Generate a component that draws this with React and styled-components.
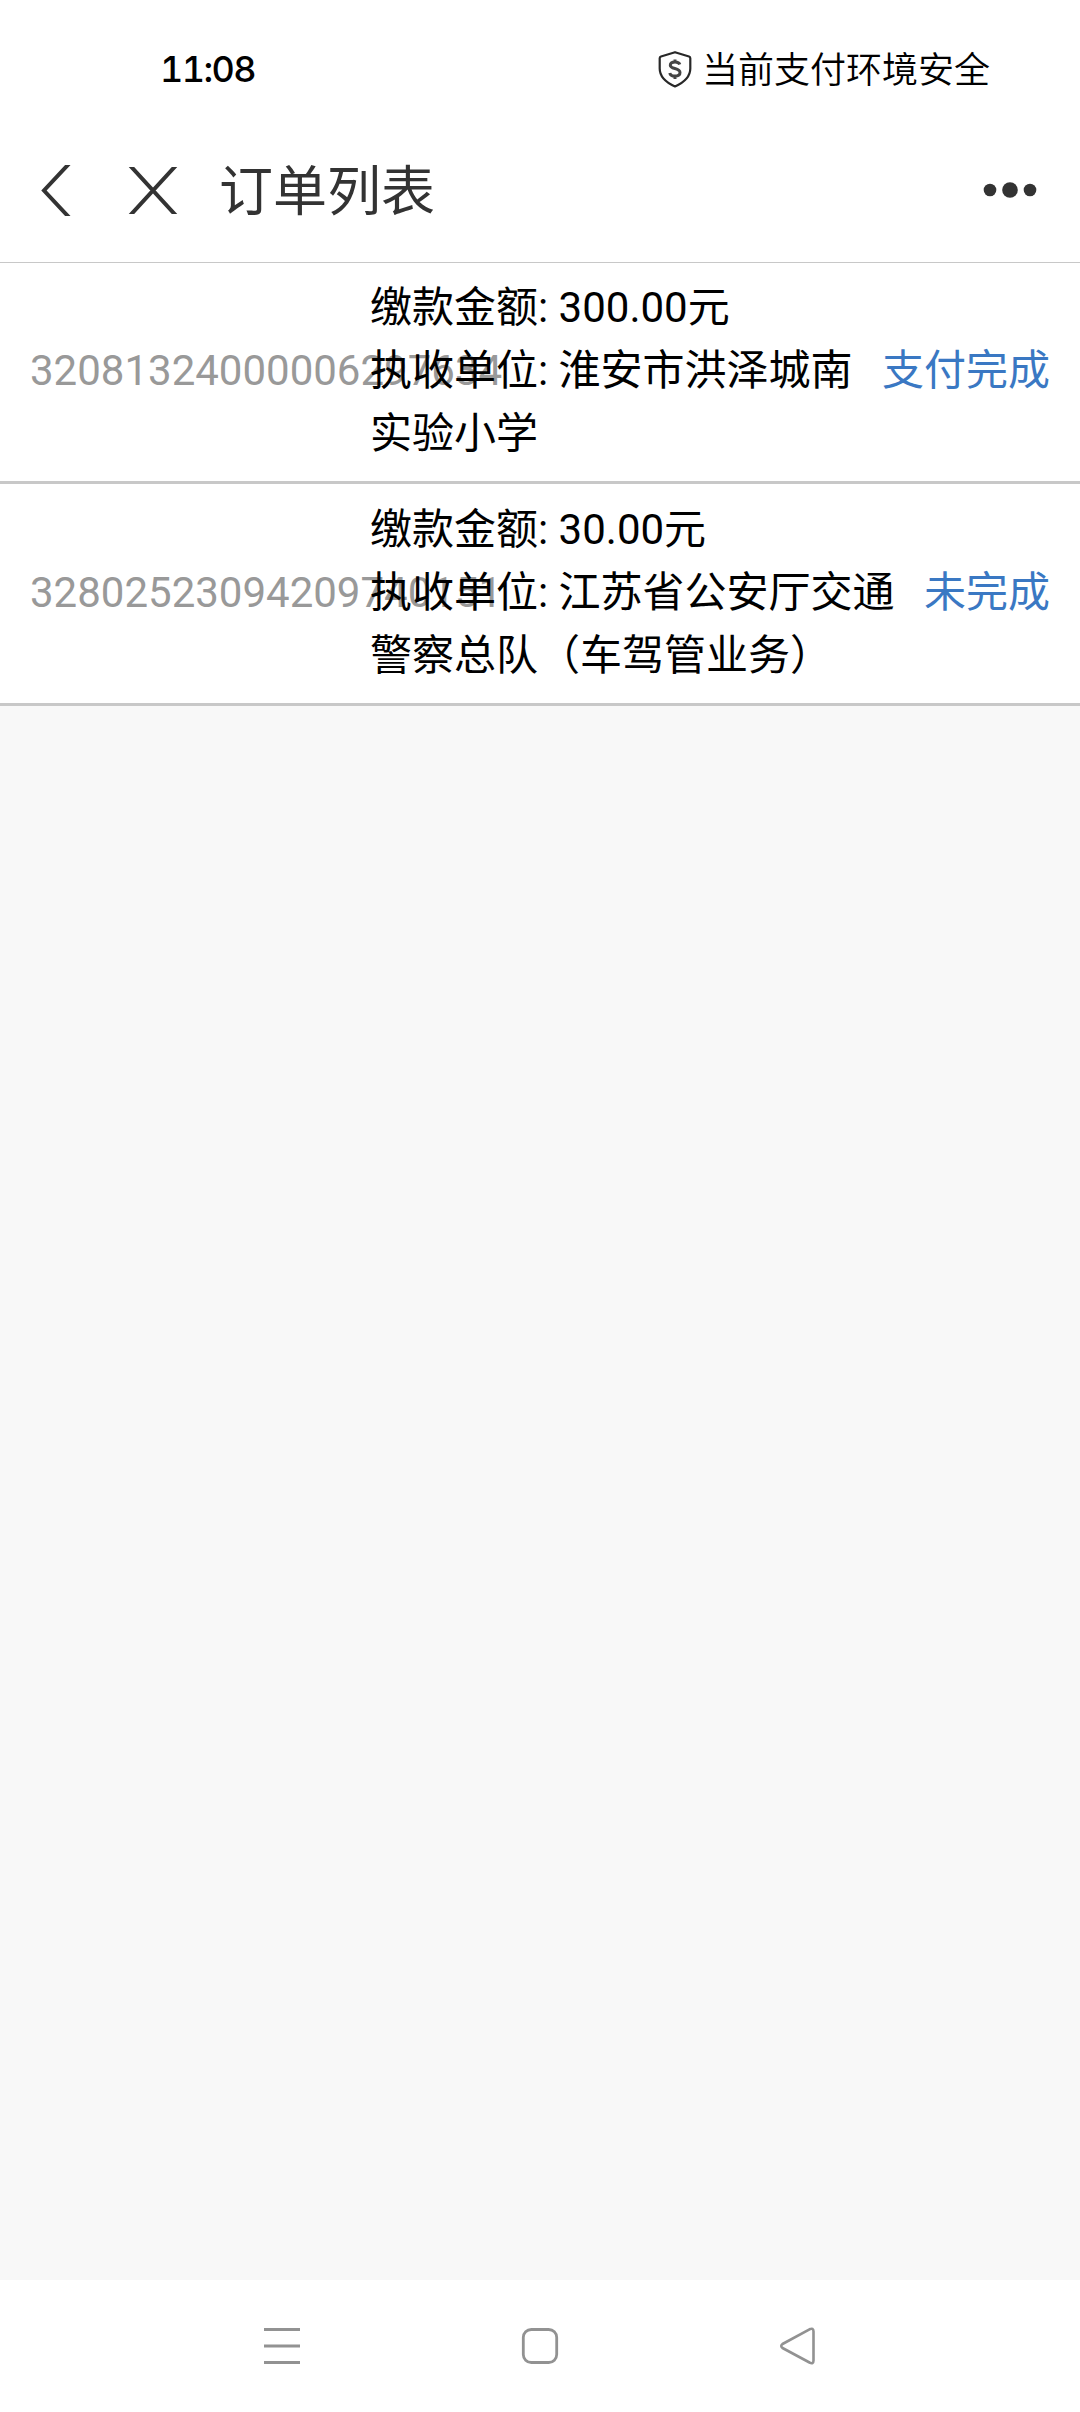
import React from 'react';
import styled, { createGlobalStyle } from 'styled-components';

const GlobalStyle = createGlobalStyle`
  * {
    box-sizing: border-box;
  }

  body {
    margin: 0;
    background: #f8f8f8;
    font-family: Roboto, 'Noto Sans CJK SC', sans-serif;
  }
`;

const Screen = styled.div`
  width: 1080px;
  height: 2412px;
  display: flex;
  flex-direction: column;
  overflow: hidden;
  background: #f8f8f8;
`;

const StatusBar = styled.div`
  height: 120px;
  display: flex;
  align-items: center;
  justify-content: space-between;
  padding: 18px 90px 0 160px;
  background: #fff;
`;

const Clock = styled.span`
  font-family: Inter, sans-serif;
  font-weight: 500;
  font-size: 36px;
  font-variant-numeric: tabular-nums;
  letter-spacing: -1.6px;
  color: #000;
`;

const Security = styled.div`
  display: flex;
  align-items: center;
  gap: 10px;
  font-family: 'Noto Sans CJK SC', sans-serif;
  font-weight: 350;
  font-size: 36px;
  line-height: 52px;
  color: #000;

  span {
    margin-bottom: 4px;
  }
`;

const NavBar = styled.header`
  height: 143px;
  display: flex;
  align-items: center;
  padding: 0 43px 2px 39px;
  border-bottom: 1px solid #c8c8c8;
  background: #fff;
  position: relative;
  z-index: 1;

  .close {
    margin-left: 53px;
  }

  .more {
    margin-left: auto;
  }
`;

const Title = styled.h1`
  margin: 0 0 5px 39px;
  font-family: 'Noto Sans CJK SC', sans-serif;
  font-weight: 400;
  font-size: 54px;
  line-height: 78px;
  color: #333;
`;

const OrderList = styled.ul`
  flex: 1;
  margin: -1px 0 0;
  padding: 0;
  list-style: none;
`;

const OrderItem = styled.li`
  height: 222px;
  display: flex;
  align-items: center;
  padding: 0 30px 2px;
  border-bottom: 3px solid #c8c8c8;
  background: #fff;
  font-size: 42px;
  line-height: 63px;
`;

const OrderNumber = styled.span`
  flex: 0 0 340px;
  width: 340px;
  white-space: nowrap;
  color: #999;
`;

const OrderDetail = styled.div`
  flex: 1;
  position: relative;
  color: #000;

  p {
    margin: 0;
  }
`;

const OrderStatus = styled.span`
  margin-left: 24px;
  white-space: nowrap;
  color: #3a78c3;
`;

const SystemBar = styled.footer`
  height: 132px;
  display: flex;
  align-items: center;
  justify-content: space-between;
  padding: 0 262px;
  background: #fff;
`;

const ShieldIcon = () => (
  <svg width="34" height="38" viewBox="0 0 34 38" fill="none">
    <path
      d="M17 2.2L31 6.500Q32.300 7 32.300 8.300V18.500C32.300 27 27 32 17 36.500C7 32 1.700 27 1.700 18.500V8.300Q1.700 7 3 6.500Z"
      stroke="#282828"
      strokeWidth="2.2"
      strokeLinejoin="round"
    />
    <path
      d="M21.800 14.500C21.300 12.700 19.500 11.900 17 11.900C14 11.900 12.300 13.100 12.300 15.200C12.300 19.700 22 17.200 22 22.500C22 24.800 20 26.100 17 26.100C14.200 26.100 12.200 25.100 11.800 22.900M17 9.500V12M17 26V29"
      stroke="#444"
      strokeWidth="3"
    />
  </svg>
);

const BackIcon = () => (
  <svg width="34" height="51" viewBox="0 0 34 51" fill="none">
    <path d="M33 -4.500L5 25.500L33 55.500" stroke="#333" strokeWidth="4" />
  </svg>
);

const CloseIcon = () => (
  <svg className="close" width="54" height="47" viewBox="0 0 54 47" fill="none">
    <path d="M1.800 -4L52.200 51M52.200 -4L1.800 51" stroke="#333" strokeWidth="4" />
  </svg>
);

const MoreIcon = () => (
  <svg className="more" width="54" height="18" viewBox="0 0 54 18" fill="#333">
    <circle cx="7" cy="9" r="6.300" />
    <circle cx="27" cy="9" r="7.800" />
    <circle cx="47" cy="9" r="6.300" />
  </svg>
);

const RecentIcon = () => (
  <svg width="40" height="38" viewBox="0 0 40 38" fill="none">
    <path d="M2 2.500H38M2 19H38M2 35.500H38" stroke="#929292" strokeWidth="3" />
  </svg>
);

const HomeIcon = () => (
  <svg width="38" height="38" viewBox="0 0 38 38" fill="none">
    <rect x="2.300" y="2.500" width="33.400" height="33" rx="8" stroke="#929292" strokeWidth="2.800" />
  </svg>
);

const TriangleIcon = () => (
  <svg width="40" height="38" viewBox="0 0 40 38" fill="none">
    <path
      d="M4.500 17L31.500 2.300Q35.500 0.500 35.500 4.500V33.500Q35.500 37.500 31.500 35.500L4.500 21Q2 19 4.500 17Z"
      stroke="#929292"
      strokeWidth="2.600"
      strokeLinejoin="round"
    />
  </svg>
);

const orders = [
  {
    number: '32081324000006297634',
    amount: '300.00',
    unit: '淮安市洪泽城南实验小学',
    status: '支付完成',
  },
  {
    number: '32802523094209740151',
    amount: '30.00',
    unit: '江苏省公安厅交通警察总队（车驾管业务）',
    status: '未完成',
  },
];

const App = () => {
  return (
    <Screen>
      <GlobalStyle />
      <StatusBar>
        <Clock>11:08</Clock>
        <Security>
          <ShieldIcon />
          <span>当前支付环境安全</span>
        </Security>
      </StatusBar>
      <NavBar>
        <BackIcon />
        <CloseIcon />
        <Title>订单列表</Title>
        <MoreIcon />
      </NavBar>
      <OrderList>
        {orders.map((order) => (
          <OrderItem key={order.number}>
            <OrderNumber>{order.number}</OrderNumber>
            <OrderDetail>
              <p>缴款金额: {order.amount}元</p>
              <p>执收单位: {order.unit}</p>
            </OrderDetail>
            <OrderStatus>{order.status}</OrderStatus>
          </OrderItem>
        ))}
      </OrderList>
      <SystemBar>
        <RecentIcon />
        <HomeIcon />
        <TriangleIcon />
      </SystemBar>
    </Screen>
  );
};

export default App;
